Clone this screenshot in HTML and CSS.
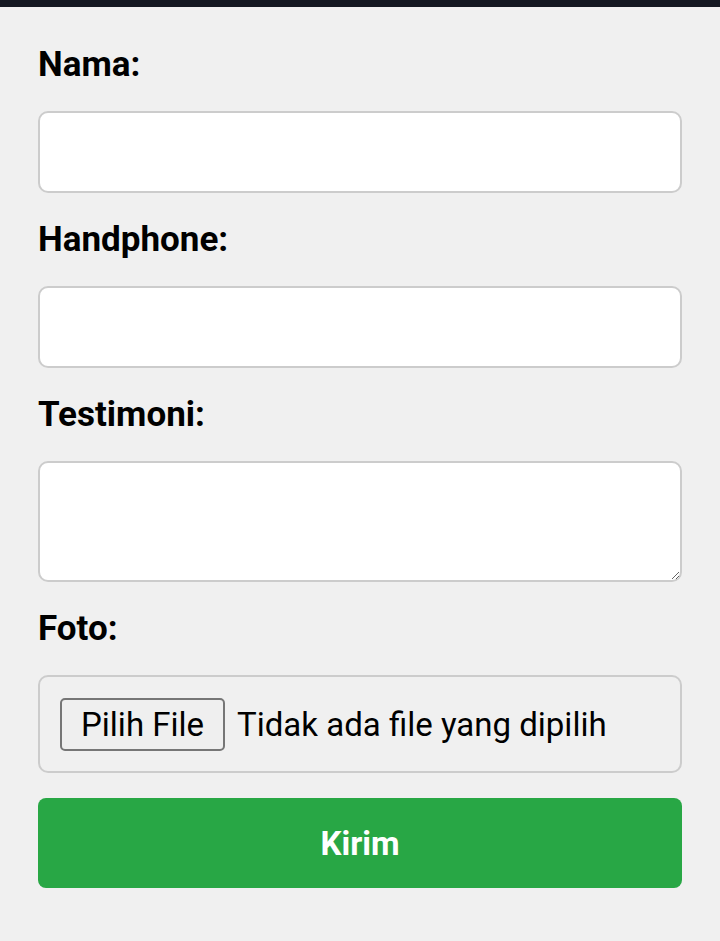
FILE: index.html
```html
<!DOCTYPE html>
<html lang="id">
<head>
<meta charset="utf-8">
<title>Testimoni</title>
<link rel="stylesheet" href="styles.css">
</head>
<body>
<div class="topbar"></div>
<form class="form">
  <label class="label" for="nama">Nama:</label>
  <input class="field" id="nama" type="text">
  <label class="label" for="hp">Handphone:</label>
  <input class="field" id="hp" type="text">
  <label class="label" for="testi">Testimoni:</label>
  <textarea class="field area" id="testi"></textarea>
  <label class="label">Foto:</label>
  <div class="field filebox">
    <span class="filebtn">Pilih File</span>
    <span class="filetext">Tidak ada file yang dipilih</span>
  </div>
  <button class="submit" type="button">Kirim</button>
</form>
</body>
</html>
```
FILE: styles.css
```css
html, body {
  margin: 0;
  padding: 0;
  background: #f0f0f0;
  font-family: Roboto, "Liberation Sans", sans-serif;
}
.topbar {
  height: 7px;
  background: #141821;
}
.form {
  display: flex;
  flex-direction: column;
  padding: 37px 38px 0;
}
.label {
  font-size: 35px;
  font-weight: 700;
  line-height: 42px;
  color: #000;
  margin-bottom: 25px;
}
.field {
  box-sizing: border-box;
  display: block;
  width: 100%;
  height: 82px;
  margin: 0 0 26px;
  border: 2px solid #cccccc;
  border-radius: 10px;
  background: #fff;
  font-family: Roboto, "Liberation Sans", sans-serif;
  font-size: 32px;
  padding: 0 20px;
  outline: none;
}
.area {
  height: 121px;
  resize: vertical;
  padding: 16px 20px;
}
.filebox {
  height: 98px;
  background: #f0f0f0;
  display: flex;
  align-items: center;
  padding: 0 20px;
  gap: 12px;
  margin-bottom: 25px;
}
.filebtn {
  box-sizing: border-box;
  height: 53px;
  display: flex;
  align-items: center;
  padding: 0 19px;
  border: 2px solid #767676;
  border-radius: 5px;
  background: #efefef;
  font-size: 33px;
  color: #000;
}
.filetext {
  font-size: 33px;
  color: #000;
}
.submit {
  height: 90px;
  border: none;
  border-radius: 8px;
  background: #28a745;
  color: #fff;
  font-family: Roboto, "Liberation Sans", sans-serif;
  font-size: 33px;
  font-weight: 700;
  cursor: pointer;
}
```
